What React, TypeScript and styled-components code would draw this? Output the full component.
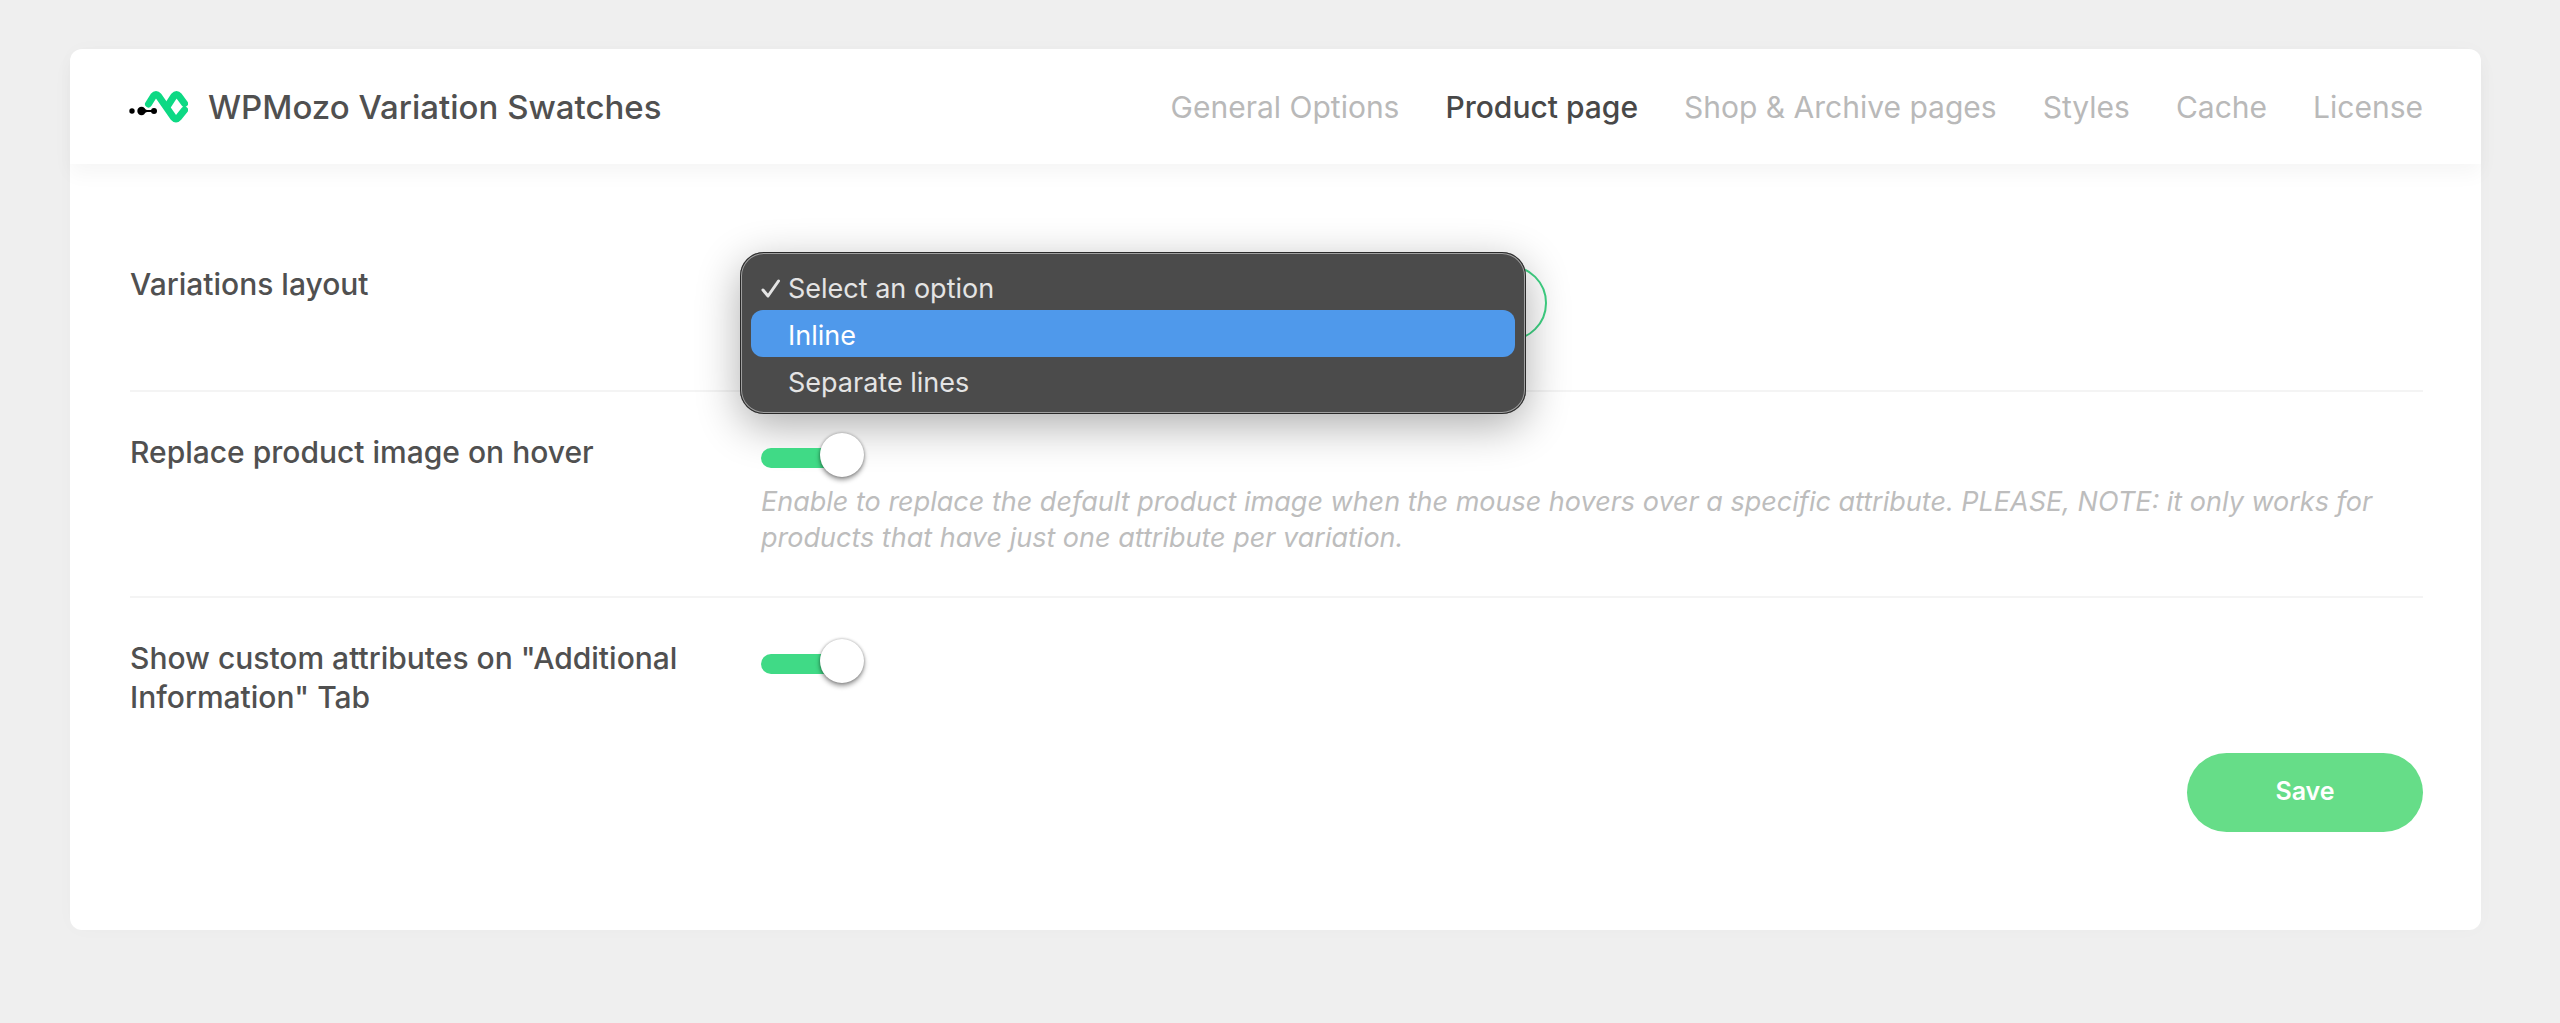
import { useState } from 'react'
import styled, { createGlobalStyle } from 'styled-components'

const tabs = ['General Options', 'Product page', 'Shop & Archive pages', 'Styles', 'Cache', 'License']

const layouts = [
  { value: '', label: 'Select an option' },
  { value: 'inline', label: 'Inline' },
  { value: 'separate', label: 'Separate lines' }
]

function Logo () {
  return (
    <svg width="60" height="34" viewBox="0 0 60 34" aria-hidden="true">
      <g fill="#000">
        <circle cx="4" cy="21" r="2.700" />
        <circle cx="13.500" cy="21" r="4.200" />
        <circle cx="26" cy="21" r="3" />
        <path d="M15 18.500l4 1.500h6v2h-6l-4 1.500z" />
      </g>
      <g fill="none" stroke="#0dd984" strokeWidth="7" strokeLinecap="round" strokeLinejoin="round">
        <path d="M20.500 14l5-8q2.500-3 5 0L45.500 27.500q2.500 3 5 0L56.500 20" />
        <path d="M39.500 16l6.500-10q2.500-3 5 0l5.500 7.500" />
      </g>
    </svg>
  )
}

export default function App () {
  const [layout, setLayout] = useState('')

  return (
    <>
      <GlobalStyle />
      <Card>
        <Header>
          <Brand>
            <Logo />
            <h1>WPMozo Variation Swatches</h1>
          </Brand>
          <Nav>
            {tabs.map(tab => (
              <Tab key={tab} href="#" $active={tab === 'Product page'}>{tab}</Tab>
            ))}
          </Nav>
        </Header>

        <Form onSubmit={e => e.preventDefault()}>
          <Row>
            <Label htmlFor="layout">Variations layout</Label>
            <SelectBox>
              <Select id="layout" value={layout} onChange={e => setLayout(e.target.value)}>
                {layouts.map(item => <option key={item.value} value={item.value}>{item.label}</option>)}
              </Select>
              <Menu role="listbox" aria-label="Variations layout">
                {layouts.map(item => (
                  <Option
                    key={item.value}
                    role="option"
                    aria-selected={item.value === layout}
                    $highlighted={item.value === 'inline'}
                    onClick={() => setLayout(item.value)}
                  >
                    {item.value === layout && (
                      <svg width="20" height="20" viewBox="0 0 20 20" aria-hidden="true">
                        <path d="M2 11l5 6L17.500 2" fill="none" stroke="currentColor" strokeWidth="3" strokeLinecap="round" strokeLinejoin="round" />
                      </svg>
                    )}
                    <span>{item.label}</span>
                  </Option>
                ))}
              </Menu>
            </SelectBox>
          </Row>

          <Row>
            <Label htmlFor="replace">Replace product image on hover</Label>
            <div>
              <Switch id="replace" type="checkbox" defaultChecked />
              <Description>
                Enable to replace the default product image when the mouse hovers over a specific attribute. PLEASE, NOTE: it only works for products that have just one attribute per variation.
              </Description>
            </div>
          </Row>

          <Row>
            <Label htmlFor="custom">Show custom attributes on "Additional Information" Tab</Label>
            <div>
              <Switch id="custom" type="checkbox" defaultChecked />
            </div>
          </Row>

          <Footer>
            <Save type="submit">Save</Save>
          </Footer>
        </Form>
      </Card>
    </>
  )
}

const GlobalStyle = createGlobalStyle`
  * {
    margin: 0;
    padding: 0;
    box-sizing: border-box;
  }

  body {
    background: #efefef;
    color: #505050;
  }

  body, input, select, button {
    font-family: Inter, 'Liberation Sans', sans-serif;
  }
`

const Card = styled.main`
  margin: 49px 79px 49px 70px;
  border-radius: 12px;
  background: #fff;
  box-shadow: 0 0 20px rgba(0, 0, 0, 0.02);
`

const Header = styled.header`
  display: flex;
  align-items: center;
  justify-content: space-between;
  height: 115px;
  padding: 0 58px;
  border-radius: 12px 12px 0 0;
  box-shadow: 0 10px 20px rgba(0, 0, 0, 0.04);
`

const Brand = styled.div`
  display: flex;
  align-items: center;
  gap: 20px;

  h1 {
    font-size: 33px;
    font-weight: 500;
  }
`

const Nav = styled.nav`
  display: flex;
  gap: 46px;
`

const Tab = styled.a<{ $active: boolean }>`
  font-size: 30px;
  font-weight: ${props => props.$active ? 500 : 400};
  line-height: 40px;
  color: ${props => props.$active ? '#484848' : '#b9b9b9'};
  text-decoration: none;
`

const Form = styled.form`
  padding: 60px 58px 98px 60px;
`

const Row = styled.div`
  display: grid;
  grid-template-columns: 631px 1fr;
  padding: 41px 0 40px;
  border-bottom: 2px solid #f4f4f4;

  &:nth-of-type(3) {
    padding-bottom: 0;
    border-bottom: 0;
  }
`

const Label = styled.label`
  padding-right: 60px;
  font-size: 30px;
  font-weight: 500;
  line-height: 39px;
`

const SelectBox = styled.div`
  position: relative;
  max-width: 786px;
  margin-bottom: 9px;
`

const Select = styled.select`
  display: block;
  width: 100%;
  height: 76px;
  padding: 0 28px;
  border: 2px solid #3fd384;
  border-radius: 38px;
  appearance: none;
  background: #fff;
  color: #545454;
  font-size: 27px;
`

const Menu = styled.ul`
  position: absolute;
  top: -13px;
  left: -21px;
  width: 100%;
  padding: 11px 11px 10px;
  border-radius: 24px;
  background: #4b4b4b;
  box-shadow:
    inset 0 0 0 1px #2a2a2a,
    inset 0 0 0 2px #a0a0a0,
    0 12px 44px rgba(0, 0, 0, 0.32);
  list-style: none;
`

const Option = styled.li<{ $highlighted: boolean }>`
  display: grid;
  grid-template-columns: 27px 1fr;
  align-items: center;
  height: 47px;
  padding: 4px 10px 0;
  border-radius: 12px;
  background: ${props => props.$highlighted ? '#4f99eb' : 'transparent'};
  color: ${props => props.$highlighted ? '#fff' : '#e4e4e4'};
  font-size: 27px;

  span {
    grid-column: 2;
  }
`

const Switch = styled.input`
  position: relative;
  display: block;
  width: 103px;
  height: 44px;
  appearance: none;

  &::before {
    content: '';
    position: absolute;
    top: 15px;
    left: 0;
    width: 90px;
    height: 20px;
    border-radius: 10px;
    background: #ccc;
  }

  &::after {
    content: '';
    position: absolute;
    top: 0;
    left: 0;
    width: 44px;
    height: 44px;
    border-radius: 50%;
    background: #fff;
    box-shadow: 0 3px 5px rgba(0, 0, 0, 0.4), 0 0 3px rgba(0, 0, 0, 0.3);
  }

  &:checked::before {
    background: #40da86;
  }

  &:checked::after {
    left: 59px;
  }
`

const Description = styled.p`
  margin-top: 7px;
  color: #bdbdbd;
  font-size: 27px;
  font-style: italic;
  line-height: 36px;
`

const Footer = styled.footer`
  display: flex;
  justify-content: flex-end;
  margin-top: 36px;
`

const Save = styled.button`
  width: 236px;
  height: 79px;
  padding-bottom: 3px;
  border: 0;
  border-radius: 40px;
  background: #66dd88;
  color: #fff;
  font-size: 25px;
  font-weight: 600;
`
